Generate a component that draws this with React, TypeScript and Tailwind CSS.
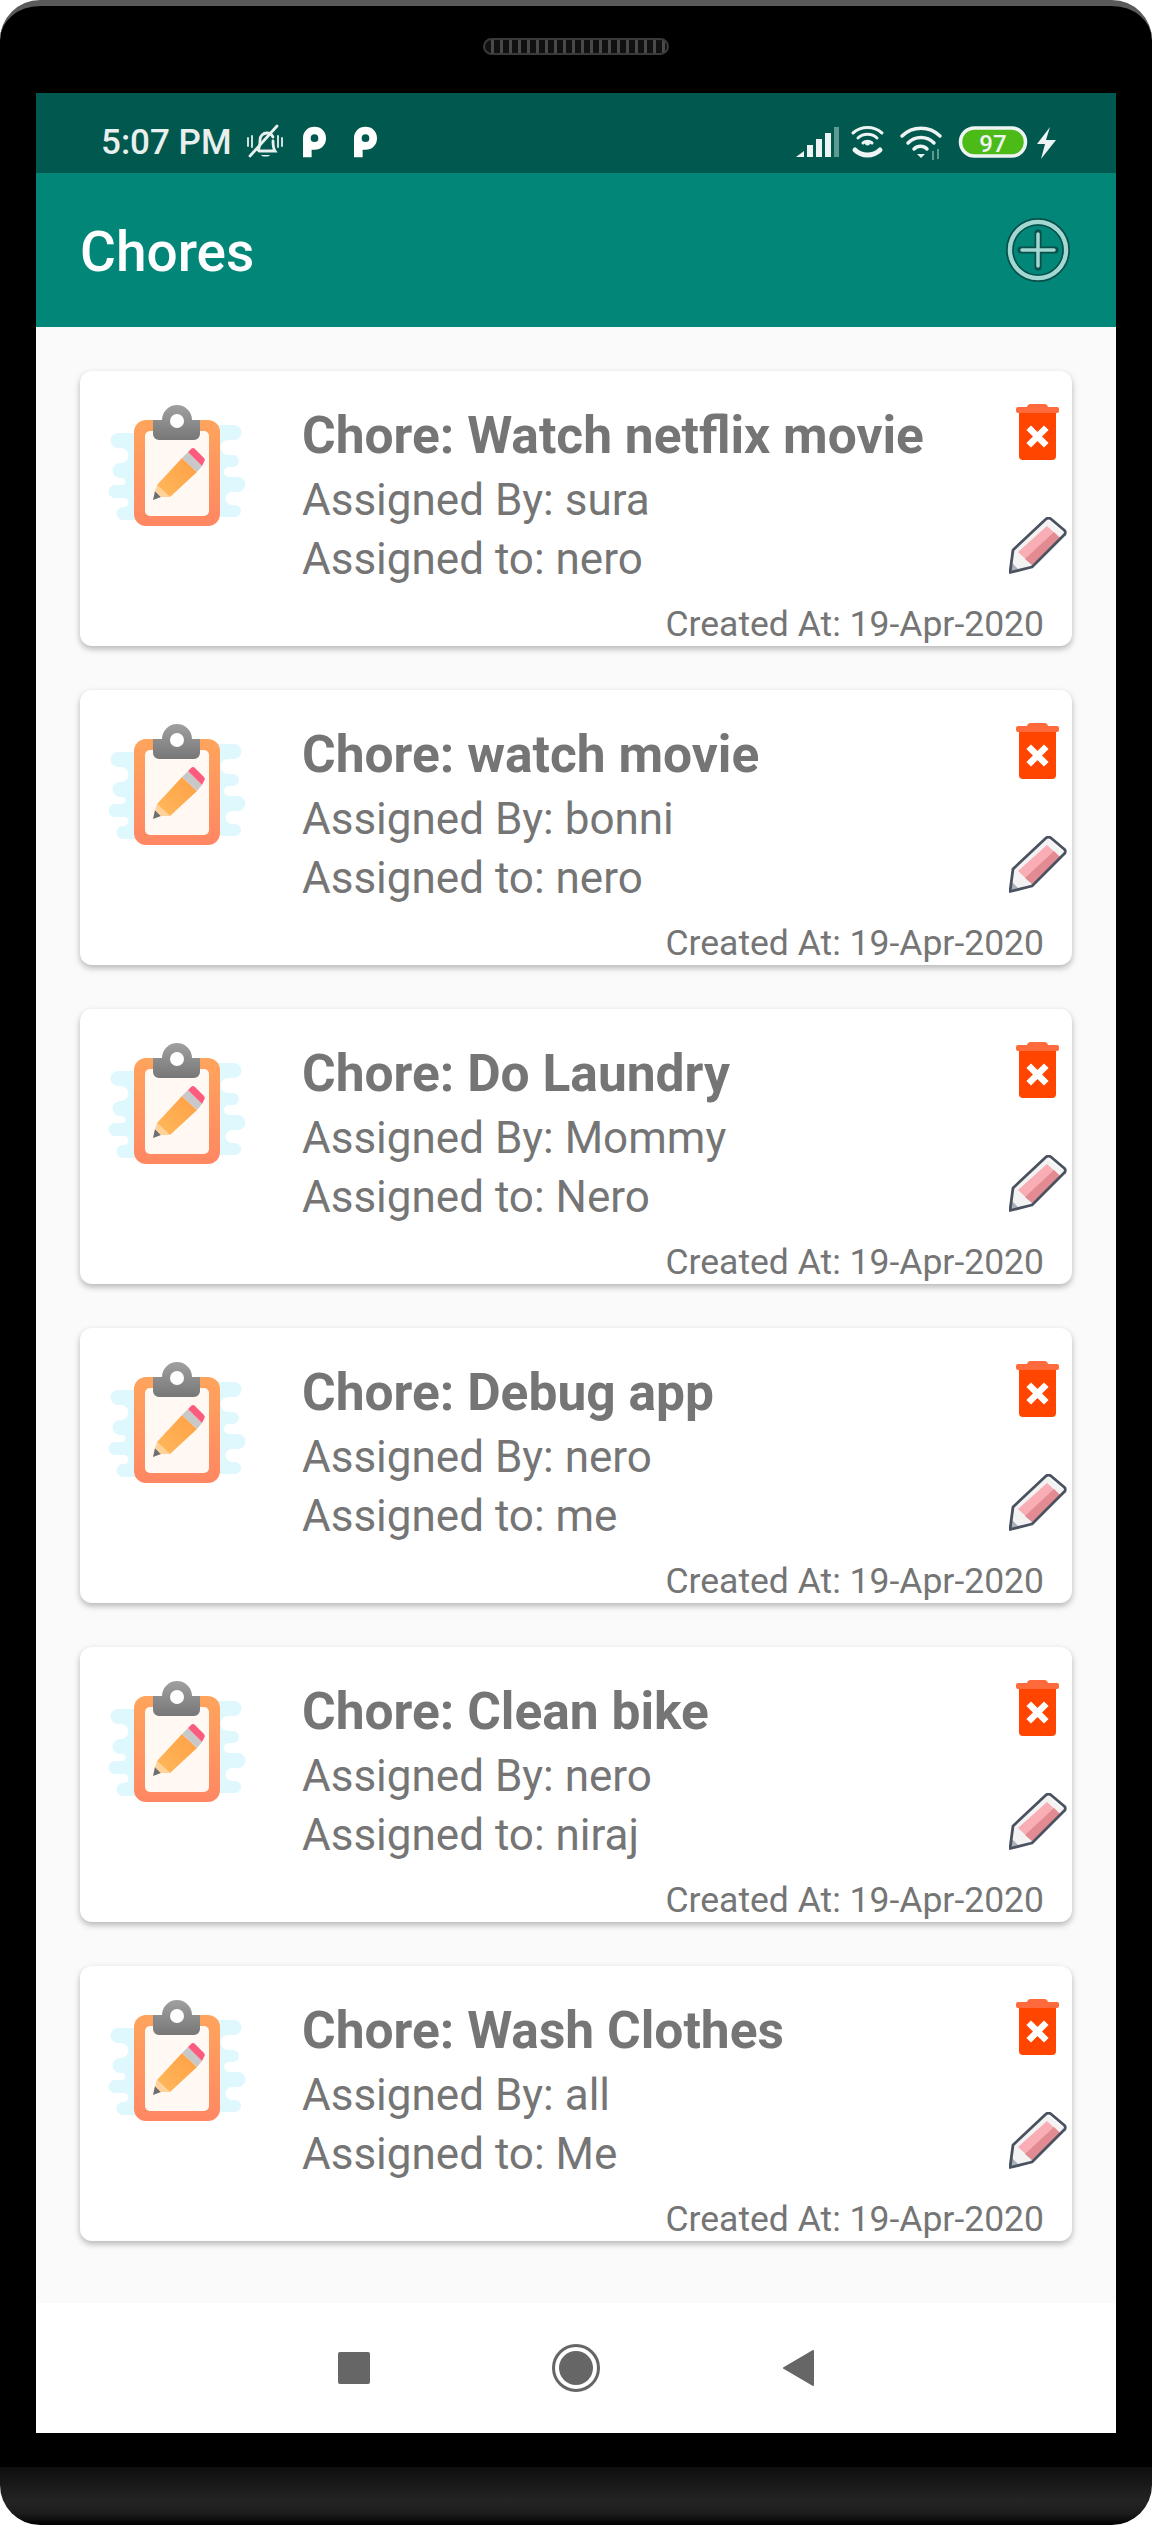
import React from "react";

const chores = [
  ["Watch netflix movie", "sura", "nero"],
  ["watch movie", "bonni", "nero"],
  ["Do Laundry", "Mommy", "Nero"],
  ["Debug app", "nero", "me"],
  ["Clean bike", "nero", "niraj"],
  ["Wash Clothes", "all", "Me"],
];

function ClipboardIcon() {
  return (
    <svg width="140" height="124" viewBox="0 0 140 124" className="block shrink-0">
      <defs>
        <linearGradient id="board" x1="0" y1="0" x2="0" y2="1">
          <stop offset="0" stopColor="#ffa45c" />
          <stop offset="1" stopColor="#ff8763" />
        </linearGradient>
        <linearGradient id="clip" x1="0" y1="0" x2="0" y2="1">
          <stop offset="0" stopColor="#a0a0a0" />
          <stop offset="1" stopColor="#777777" />
        </linearGradient>
        <linearGradient id="pen" x1="0" y1="1" x2="1" y2="0">
          <stop offset="0" stopColor="#ffb95c" />
          <stop offset="1" stopColor="#ff9f45" />
        </linearGradient>
      </defs>
      <path
        fill="#dff8fe"
        d="M30 28H10a7.500 7.500 0 0 0 0 15h3a7.500 7.500 0 0 1 0 15h-1a7.500 7.500 0 0 0 0 15h2a3.500 3.500 0 0 1 0 7H7a6.500 6.500 0 0 0 0 13h9a4.500 4.500 0 0 1 0 9h-1a6.500 6.500 0 0 0 0 13H30Z"
      />
      <path
        fill="#dff8fe"
        d="M110 20H126a7.500 7.500 0 0 1 0 15h-6a7.500 7.500 0 0 0 0 15h5a6 6 0 0 1 0 12h-4a5 5 0 0 0 0 10h9a7.500 7.500 0 0 1 0 15h-6a6.500 6.500 0 0 0 0 13h3a6 6 0 0 1 0 12H110Z"
      />
      <rect x="26" y="15" width="86" height="106" rx="12" fill="url(#board)" />
      <rect x="37" y="26" width="64" height="85" rx="5" fill="#fff8f3" />
      <path fill="url(#clip)" d="M45 15h9a15 15 0 0 1 30 0h8v14a6 6 0 0 1-6 6H51a6 6 0 0 1-6-6Z" />
      <circle cx="69" cy="16" r="7" fill="#fff" />
      <path fill="#6f6f6f" d="M45 95 47 86 53 92Z" />
      <path fill="#ffd29a" d="M47 86 49 80 62 92 53 92Z" />
      <path fill="url(#pen)" d="M49 80 74 53 89 67 62 92Z" />
      <path fill="#c8c8c8" d="M74 53 80 47 94 61 89 67Z" />
      <path fill="#fb5c7e" d="M80 47 83 44a3 3 0 0 1 4 0l9 9a3 3 0 0 1 0 4l-2 4Z" />
    </svg>
  );
}

function TrashIcon() {
  return (
    <svg width="43" height="56" viewBox="0 0 43 56" className="block">
      <path fill="#ff6a3d" d="M15 0h13a4 4 0 0 1 4 3h9a2 2 0 0 1 2 2v2a2 2 0 0 1-2 2H2A2 2 0 0 1 0 7V5a2 2 0 0 1 2-2h9a4 4 0 0 1 4-3Z" />
      <path fill="#ff4500" d="M3 9h37v43a4 4 0 0 1-4 4H7a4 4 0 0 1-4-4V9Z" />
      <path stroke="#fff" strokeWidth="6.500" strokeLinecap="square" d="M15 26 28 39M28 26 15 39" />
    </svg>
  );
}

function PencilIcon() {
  return (
    <svg width="58" height="58" viewBox="0 0 58 58" className="block">
      <path fill="#f3f3f3" d="M4 33 37 2 55 16 23 50 1 55Z" />
      <path fill="#f9aeb5" d="M9 35 38 9 51 21 23 48Z" />
      <path fill="#e28b92" d="M16 42 45 15 51 21 23 48Z" />
      <path fill="#aab0bc" d="M1 55 3 46 9 52Z" />
      <path fill="none" stroke="#4a5260" strokeWidth="2.800" strokeLinejoin="round" d="M4 33 37 2a4 4 0 0 1 5 0L55 13a3 3 0 0 1 0 5L23 50 1 55.500Z" />
    </svg>
  );
}

function ChoreCard({ name, by, to }: { name: string; by: string; to: string }) {
  return (
    <div className="flex h-[275px] flex-col rounded-[12px] bg-white shadow-[0_3px_6px_rgba(0,0,0,0.28)]">
      <div className="flex h-[235px] pl-[28px] pr-[5px]">
        <div className="pt-[34px]">
          <ClipboardIcon />
        </div>
        <div className="ml-[54px] min-w-0 flex-1 whitespace-nowrap text-[#757575]">
          <div className="mt-[36px] text-[51.500px] leading-[58px] font-bold">Chore: {name}</div>
          <div className="mt-[6px] text-[44px] leading-[58px]">Assigned By: {by}</div>
          <div className="mt-[1px] text-[44px] leading-[58px]">Assigned to: {to}</div>
        </div>
        <div className="w-[58px] shrink-0 pt-[33px]">
          <div className="ml-[7px]">
            <TrashIcon />
          </div>
          <div className="mt-[57px]">
            <PencilIcon />
          </div>
        </div>
      </div>
      <div className="pr-[28px] text-right text-[35.500px] leading-[36px] text-[#757575]">
        Created At: 19-Apr-2020
      </div>
    </div>
  );
}

function StatusIcons() {
  return (
    <svg width="262" height="36" viewBox="0 0 262 36" className="block">
      <g fill="#eef4f3" transform="translate(0 2)">
        <path d="M0 31 8 25V31Z" />
        <rect x="11" y="19" width="6" height="12" />
        <rect x="20" y="13" width="6" height="18" />
        <rect x="29" y="7" width="6" height="24" />
        <rect x="38" y="1" width="5" height="30" fill="#5f9a91" />
      </g>
      <g fill="none" stroke="#eef4f3" strokeWidth="3" strokeLinecap="round">
        <path d="M57 9a22 22 0 0 1 29 0" />
        <path d="M62 14a14 14 0 0 1 19 0" />
        <path d="M67 19a7 7 0 0 1 9 0" />
        <path d="M59 26a18 18 0 0 0 25 0" strokeWidth="5" />
      </g>
      <circle cx="71.500" cy="19" r="2.500" fill="#eef4f3" />
      <g fill="none" stroke="#eef4f3" strokeWidth="3.500" strokeLinecap="round">
        <path d="M106 12a27 27 0 0 1 38 0" />
        <path d="M112 19a18 18 0 0 1 26 0" />
        <path d="M118 25a9 9 0 0 1 13 0" />
      </g>
      <path d="M121 30h8l-4 4Z" fill="#eef4f3" />
      <path d="M137 27v9M142 25v10" stroke="#5f9a91" strokeWidth="2" />
      <rect x="164.500" y="4" width="65" height="28" rx="14" fill="#4cbb17" stroke="#eef4f3" strokeWidth="3.500" />
      <text x="197" y="28" textAnchor="middle" fill="#eef4f3" fontFamily="Roboto, sans-serif" fontSize="24" fontWeight="500">97</text>
      <path d="M254 3 241 20H249L245 35 260 16H250Z" fill="#eef4f3" />
    </svg>
  );
}

function BellOff() {
  return (
    <svg width="36" height="36" viewBox="0 0 36 36" className="block">
      <g fill="none" stroke="#e8efed" strokeWidth="2.800" strokeLinecap="round">
        <path d="M1 14v8M5 12v11M31 12v11M35 14v8" strokeWidth="1.800" />
        <path d="M11 26c2-3 2-6 2-10 0-4 3-7 7-7 3 0 5 2 6 4M26 17c0 4 0 7 2 10H12" />
        <path d="M3 32 30 2" />
      </g>
      <path d="M14 31h9c-1 2-8 2-9 0Z" fill="#e8efed" />
    </svg>
  );
}

function ParkIcon() {
  return (
    <svg width="23" height="32" viewBox="0 0 24 32" className="block">
      <path
        fill="#fff"
        fillRule="evenodd"
        d="M0 32V12C0 5 5 0 12 0s12 5 12 12-5 12-12 12H9v8H0ZM12 8a4 4 0 0 0-4 4 4 4 0 0 0 4 4 4 4 0 0 0 0-8Z"
      />
    </svg>
  );
}

export default function App() {
  return (
    <div className="flex h-[2525px] w-[1152px] flex-col overflow-hidden bg-white font-['Roboto',sans-serif]">
      <div className="flex h-[2467px] flex-col rounded-t-[40px] border-t-[6px] border-[#5a5a5a] bg-black px-[36px]">
        <div className="flex h-[87px] items-start justify-center pt-[32px]">
          <div className="h-[17px] w-[186px] rounded-full border-2 border-[#3a3a3a] bg-[repeating-linear-gradient(90deg,#111_0,#111_6px,#4a4a4a_6px,#4a4a4a_9px)]" />
        </div>
        <div className="flex h-[2340px] flex-col bg-[#fafafa]">
          <div className="flex h-[80px] shrink-0 items-center justify-between bg-[#00584f] pl-[65px] pr-[58px] pt-[18px] text-[#e8efed]">
            <div className="flex items-center">
              <span className="text-[35px] leading-none font-medium">5:07 PM</span>
              <span className="ml-[15px]"><BellOff /></span>
              <span className="ml-[20px]"><ParkIcon /></span>
              <span className="ml-[28px]"><ParkIcon /></span>
            </div>
            <StatusIcons />
          </div>
          <div className="flex h-[154px] shrink-0 items-center justify-between bg-[#028678] pl-[44px] pr-[46px]">
            <span className="pt-[5px] text-[55px] leading-none font-medium text-white">Chores</span>
            <svg width="64" height="64" viewBox="0 0 64 64">
              <circle cx="32" cy="32" r="31" fill="none" stroke="#0b4f4a" strokeWidth="2" />
              <circle cx="32" cy="32" r="28" fill="none" stroke="#a3d8d2" strokeWidth="4.500" />
              <circle cx="32" cy="32" r="25" fill="none" stroke="#0b4f4a" strokeWidth="1.500" />
              <path d="M32 15V49M15 32H49" stroke="#0b4f4a" strokeWidth="7" strokeLinecap="round" />
              <path d="M32 16V48M16 32H48" stroke="#a3d8d2" strokeWidth="3.500" strokeLinecap="round" />
            </svg>
          </div>
          <div className="flex flex-1 flex-col gap-[44px] px-[44px] pt-[44px]">
            {chores.map(([n, b, t]) => (
              <ChoreCard key={n} name={n} by={b} to={t} />
            ))}
          </div>
          <div className="flex h-[130px] shrink-0 items-center justify-center gap-[182px] bg-white">
            <div className="h-[32px] w-[32px] rounded-[2px] bg-[#666666]" />
            <div className="flex h-[48px] w-[48px] items-center justify-center rounded-full border-[3px] border-[#666666]">
              <div className="h-[34px] w-[34px] rounded-full bg-[#666666]" />
            </div>
            <svg width="32" height="36" viewBox="0 0 32 36">
              <path d="M31 1V35L2 18Z" fill="#666666" stroke="#666666" strokeWidth="2" strokeLinejoin="round" />
            </svg>
          </div>
        </div>
        <div className="flex-1" />
      </div>
      <div className="h-[58px] rounded-b-[40px] bg-[linear-gradient(180deg,#0e0e0e_0%,#242424_60%,#1c1c1c_80%,#000_100%)]" />
    </div>
  );
}
